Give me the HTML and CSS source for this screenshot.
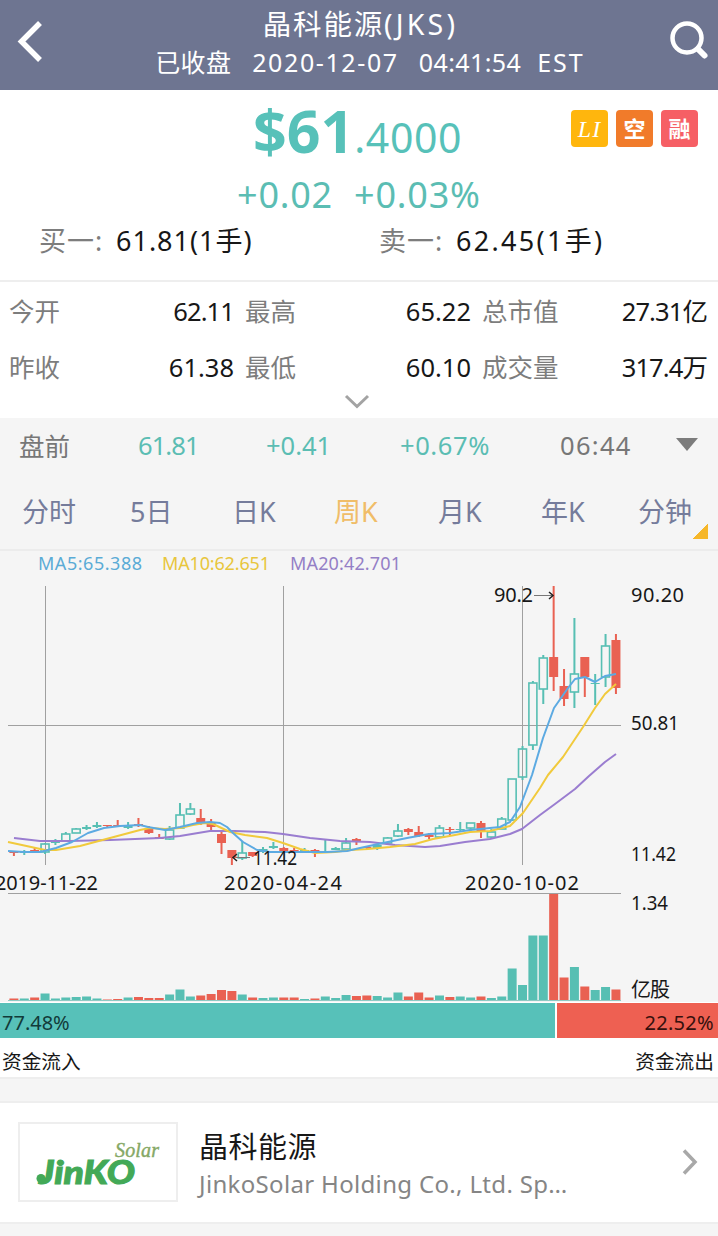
FILE: index.html
```html
<!DOCTYPE html>
<html lang="zh-CN">
<head>
<meta charset="utf-8">
<title>晶科能源(JKS)</title>
<link rel="stylesheet" href="styles.css">
</head>
<body>
<header class="header">
  <svg class="back" width="30" height="46" viewBox="0 0 30 46"><path d="M26 5 7.500 23.500 26 42" fill="none" stroke="#fff" stroke-width="5.500"/></svg>
  <div class="heading">
    <h1 class="title">晶科能源<span class="ticker">(JKS)</span></h1>
    <div class="status"><span class="closed">已收盘</span><span class="date">2020-12-07</span><span class="time">04:41:54</span><span class="zone">EST</span></div>
  </div>
  <svg class="search" width="42" height="42" viewBox="0 0 42 42"><circle cx="18" cy="18" r="14.500" fill="none" stroke="#fff" stroke-width="4.500"/><path d="m29 29 6.500 6.500" stroke="#fff" stroke-width="6" stroke-linecap="round"/></svg>
</header>

<section class="quote">
  <div class="price-row">
    <div class="price"><b>$61</b><span>.4000</span></div>
    <div class="badges"><i class="badge li">LI</i><b class="badge short">空</b><b class="badge margin">融</b></div>
  </div>
  <div class="change"><span>+0.02</span><span class="percent">+0.03%</span></div>
  <div class="bids">
    <div><span class="label">买一:</span><span class="bid">61.81(1手)</span></div>
    <div><span class="label">卖一:</span><span class="bid ask">62.45(1手)</span></div>
  </div>
</section>

<section class="stats">
  <div class="stat-row"><span class="label">今开</span><span class="val narrow">62.11</span><span class="label">最高</span><span class="val">65.22</span><span class="label">总市值</span><span class="val narrow">27.31亿</span></div>
  <div class="stat-row"><span class="label">昨收</span><span class="val">61.38</span><span class="label">最低</span><span class="val">60.10</span><span class="label">成交量</span><span class="val narrow">317.4万</span></div>
  <svg class="more" width="28" height="16" viewBox="0 0 28 16"><path d="m3 2 11 10.500L25 2" fill="none" stroke="#a3a3a3" stroke-width="3"/></svg>
</section>

<section class="pre">
  <span class="pre-name">盘前</span><span class="up narrow">61.81</span><span class="up">+0.41</span><span class="up wide">+0.67%</span><span class="clock">06:44</span>
  <svg width="24" height="14" viewBox="0 0 24 14"><path d="M1 0h22L12 13z" fill="#7c7c7c"/></svg>
</section>

<nav class="tabs">
  <span>分时</span><span>5日</span><span>日K</span><span class="active">周K</span><span>月K</span><span>年K</span><span class="minute">分钟</span>
</nav>

<section class="chart">
  <svg id="chart" width="718" height="452" viewBox="0 550 718 452">
    <g class="ma-labels">
      <text x="38" y="570" textLength="104" fill="#5aabd6">MA5:65.388</text>
      <text x="162" y="570" textLength="108" fill="#e8c63c">MA10:62.651</text>
      <text x="290" y="570" textLength="111" fill="#947fc6">MA20:42.701</text>
    </g>
    <path d="M45.500 586V865M283.500 586V865M522.500 586V865M8 725.500H621M8 893.500H621" stroke="#a0a0a0"/>
    <g id="candles"></g>
    <g id="averages" fill="none" stroke-width="2" stroke-linejoin="round"></g>
    <g id="volume"></g>
    <g class="axis">
      <text x="494" y="602" textLength="39">90.2</text>
      <text x="631" y="602" textLength="53">90.20</text>
      <text x="631" y="730" textLength="48" lengthAdjust="spacingAndGlyphs">50.81</text>
      <text x="631" y="861" textLength="45" lengthAdjust="spacingAndGlyphs">11.42</text>
      <text x="253" y="865" textLength="44" lengthAdjust="spacingAndGlyphs">11.42</text>
      <text x="-5" y="890" textLength="103">2019-11-22</text>
      <text x="224" y="890" textLength="118">2020-04-24</text>
      <text x="465" y="890" textLength="114">2020-10-02</text>
      <text x="631" y="910" textLength="37" lengthAdjust="spacingAndGlyphs">1.34</text>
      <text x="631" y="997" textLength="39">亿股</text>
    </g>
    <path d="M534 595.500h18M236 857.500h14" stroke="#777"/>
    <path d="m549 592 4 3.500-4 3.500M237 854l-4 3.500 4 3.500" fill="none" stroke="#222" stroke-width="1.500"/>
  </svg>
</section>

<section class="flow">
  <div class="flow-bar"><span class="in">77.48%</span><span class="out">22.52%</span></div>
  <div class="flow-names"><span>资金流入</span><span>资金流出</span></div>
</section>

<section class="company">
  <div class="logo">
    <svg width="156" height="76" viewBox="0 0 156 76">
      <text class="solar" x="95" y="33" textLength="44">Solar</text>
      <text class="jinko" x="19" y="59.500" textLength="96" lengthAdjust="spacingAndGlyphs">JinKO</text>
      <circle cx="21" cy="54.500" r="4.500" fill="#43a957"/>
    </svg>
  </div>
  <div class="company-text"><div class="cn">晶科能源</div><div class="en">JinkoSolar Holding Co., Ltd. Sp…</div></div>
  <svg class="go" width="20" height="30" viewBox="0 0 20 30"><path d="m4 3.500 11 11.500L4 26.500" fill="none" stroke="#a8a8a8" stroke-width="3.500"/></svg>
</section>
<script src="chart.js"></script>
</body>
</html>
```
FILE: styles.css
```css
* { box-sizing: border-box; }
body {
  margin: 0;
  width: 718px;
  height: 1236px;
  overflow: hidden;
  background: #f5f5f5;
  color: #171717;
  font-family: "Noto Sans", "Noto Sans CJK SC", sans-serif;
  font-size: 25.5px;
}
svg { display: block; flex: none; }
span, b, i { white-space: nowrap; }
.label { color: #7d7d7d; }

.header {
  height: 90px;
  background: #6e7591;
  color: #fff;
  display: flex;
  justify-content: space-between;
  padding: 18px 7px 0 14px;
}
.search { margin-top: 2px; }
.heading { margin-top: -18px; width: 480px; display: flex; flex-direction: column; align-items: center; }
.title { margin: 4px 0 0 8px; font-size: 28.5px; font-weight: 400; line-height: 40px; letter-spacing: 1.8px; }
.ticker { letter-spacing: 3.2px; }
.status { display: flex; margin-left: 27px; font-size: 25px; line-height: 37px; }
.closed { margin-right: 21px; letter-spacing: .3px; }
.date { margin-right: 20px; letter-spacing: 1.6px; }
.time { margin-right: 16px; letter-spacing: .4px; }
.zone { letter-spacing: 2px; }

.quote { height: 192px; background: #fff; border-bottom: 2px solid #eee; }
.price-row { height: 78px; display: flex; justify-content: space-between; padding: 6px 20px 0 253px; color: #57c1b9; }
.price { display: flex; align-items: baseline; line-height: 68px; }
.price b { font-size: 59px; }
.price span { font-size: 41px; letter-spacing: .6px; }
.badges { display: flex; gap: 8px; padding-top: 14px; }
.badge { width: 37px; height: 37px; border-radius: 4px; color: #fff; text-align: center; font-size: 22px; line-height: 37px; }
.li { background: #ffb60d; font: italic 24px/38px "Liberation Serif", serif; letter-spacing: 1px; }
.short { background: #f17b2a; }
.margin { background: #f65f65; }
.change { display: flex; gap: 21px; padding-left: 237px; height: 52px; line-height: 54px; font-size: 36px; letter-spacing: .8px; color: #5bbdb3; }
.bids { display: grid; grid-template-columns: 340px 1fr; padding-left: 39px; line-height: 42px; font-size: 27px; }
.bids > div { display: flex; justify-content: flex-start; }
.bids .label { width: 77px; letter-spacing: 1px; }
.bid { letter-spacing: 1px; }
.ask { letter-spacing: 2.3px; }

.stats { height: 136px; background: #fff; }
.stat-row { height: 56px; line-height: 58px; display: grid; grid-template-columns: 90px 135px 90px 147px 110px 1fr; padding: 0 11px 0 9px; }
.stat-row .label:nth-child(n+3) { padding-left: 11px; }
.stat-row .val { text-align: right; }
.stat-row .narrow { letter-spacing: -.9px; }
.more { margin: 0 0 0 343px; }

.pre { height: 55px; display: grid; grid-template-columns: 119px 128px 134px 160px 115px 24px; align-items: center; padding: 0 0 2px 19px; color: #777; }
.up { color: #5bbdb3; }
.pre .narrow { letter-spacing: -.9px; }
.wide { letter-spacing: .6px; }
.clock { letter-spacing: 1.3px; }
.tabs { height: 78px; line-height: 78px; display: grid; grid-template-columns: 108px 102px 102px 104px 103px 97px 72px; padding-left: 22px; color: #757c9b; font-size: 27px; border-bottom: 2px solid #ececec; }
.active { color: #f0bd68; }
.minute { background: linear-gradient(135deg, transparent 50%, #f6b729 50%) 55px 50px / 15px 16px no-repeat; }

.chart { height: 452px; margin-top: -1px; }
.ma-labels { font-size: 18px; }
.axis { font-size: 20px; fill: #171717; }

.flow { background: #fff; border-bottom: 2px solid #eee; height: 77px; padding-top: 1px; }
.flow-bar { height: 35px; display: flex; gap: 2px; line-height: 39px; font-size: 20px; }
.in { width: 555px; padding-left: 2px; background: #57c1b9; color: #123b39; }
.out { flex: 1; padding-right: 4px; text-align: right; background: #ee6052; color: #36100d; letter-spacing: .3px; }
.flow-names { display: flex; justify-content: space-between; padding: 0 4px 0 2px; line-height: 47px; font-size: 19.700px; }

.company { height: 123px; margin-top: 22px; background: #fff; border: solid #eee; border-width: 2px 0; display: flex; padding: 19px 18px 0; }
.logo { width: 160px; height: 80px; border: 2px solid #eee; }
.solar { font: italic 20px "Liberation Serif", serif; fill: #85a865; stroke: #85a865; stroke-width: .4; }
.jinko { font: italic 900 33px Lato, sans-serif; fill: #43a957; stroke: #43a957; stroke-width: 1; }
.company-text { margin-left: 21px; width: 481px; }
.cn { font-size: 29px; line-height: 44px; margin-top: 3px; letter-spacing: .5px; }
.en { font-size: 24px; line-height: 29px; letter-spacing: .33px; color: #858585; }
.go { margin-top: 25px; }
```
FILE: chart.js
```js
const TEAL = "#57bfb3", RED = "#e96152";
const X0 = 13.9, STEP = 10.38;

// direction, high, body top, body bottom, low, volume height
const weeks = [
  ["r",851,851,853,856,2],["t",850,852,853,855,2],["r",848,850,852,853,3],["t",843,844,852,854,7],
  ["t",839,841,843,845,2],["t",832,834,841,841,3],["t",828,829,833,833,3.5],["t",825,827,829,830,4],
  ["t",822,825,827,828,2],["r",825,825,826,827,1],["r",820,825,826,827,1.5],["t",822,825,828,829,3],
  ["r",818,824,826,827,3.5],["r",826,829,833,834,2.5],["r",834,837,839,839,2.5],["t",826,830,839,840,6],
  ["t",803,815,828,829,11],["t",803,809,814,815,4],["r",809,818,823,825,5],["r",819,822,827,831,6.5],
  ["r",832,834,843,854,10.5],["r",850,850,858,865,9.5],["t",841,853,858,860,6],["r",852,852,856,857,3],
  ["t",847,849,852,853,2.5],["t",842,846,848,849,3],["r",847,848,851,852,3],["r",848,850,851,853,3],
  ["t",848,850,852,853,1.5],["r",849,850,853,857,2],["t",840,852,853,853,4],["t",847,848,850,850,2.5],
  ["t",838,843,849,849,5.5],["r",838,839,842,845,4.5],["r",846,847,848,849,5],["t",844,845,848,850,4.5],
  ["t",837,838,843,844,3],["t",824,831,836,837,8],["r",828,829,832,835,4],["r",826,832,836,837,8],
  ["r",833,835,837,839,3],["t",825,828,837,838,5],["r",827,829,830,835,3.5],["t",822,829,830,831,4],
  ["t",823,823,828,831,3],["r",821,823,832,838,4],["t",829,832,837,839,2.5],["t",817,819,829,829,4],
  ["t",779,779,820,821,32],["t",746,749,777,780,15.5],["t",681,683,745,750,65],["t",655,658,689,704,65],
  ["r",586,657,677,691,106.5],["r",669,686,699,706,23],["t",618,674,692,708,33.5],["r",657,657,677,697,14],
  ["t",674,683,684,705,10.5],["t",634,646,677,687,13.5],["r",634,640,688,694,11]
];

let candles = "", volume = "";
weeks.forEach(([dir, high, top, bottom, low, vol], i) => {
  const x = X0 + i * STEP;
  const color = dir === "r" ? RED : TEAL;
  candles += `<path d="M${x} ${high}V${top}M${x} ${bottom}V${low}" stroke="${color}" stroke-width="2"/>`;
  if (dir === "t" && bottom - top > 3)
    candles += `<rect x="${x - 4}" y="${top}" width="8" height="${bottom - top}" fill="none" stroke="${color}" stroke-width="1.6"/>`;
  else
    candles += `<rect x="${x - 4.5}" y="${top}" width="9" height="${bottom - top}" fill="${color}"/>`;
  volume += `<rect x="${x - 4.5}" y="${1000.5 - vol}" width="9" height="${vol}" fill="${color}"/>`;
});
volume += `<path d="M8 1000.5H621" stroke="#8fcac4"/>`;
document.getElementById("candles").innerHTML = candles;
document.getElementById("volume").innerHTML = volume;

const averages = [
  ["#9a7dd0", "14,838 40,841 70,841 110,840 160,838 180,836 210,831 235,831 265,832 283,834 310,838 340,841 370,842 395,845 425,847 440,846 465,842 490,839 510,834 522,829 540,815 555,804 575,789 589,776 605,762 616,754"],
  ["#f1ca3c", "8,842 45,850 56,850 80,846 110,838 140,830 150,828 165,829 180,828 193,825 205,823 213,824 230,832 245,835 267,838 283,843 300,849 315,853 335,852 350,850 368,849 390,847 415,844 433,839 455,835 470,832 490,831 510,826 523,813 540,788 548,775 563,757 583,727 595,708 605,694 616,684"],
  ["#5caae2", "8,851 24,852 40,852 56,848 72,842 88,833 104,828 120,826 140,825 148,827 165,830 180,827 197,823 210,822 220,823 227,827 233,833 243,842 257,850 270,852 293,852 307,852 327,852 347,851 360,848 383,843 407,838 429,834 450,833 470,830 500,827 510,822 520,807 532,775 543,738 554,708 568,688 575,679 585,677 595,682 605,676 616,674"]
];
document.getElementById("averages").innerHTML = averages
  .map(([color, points]) => `<polyline points="${points}" stroke="${color}"/>`).join("");
```
